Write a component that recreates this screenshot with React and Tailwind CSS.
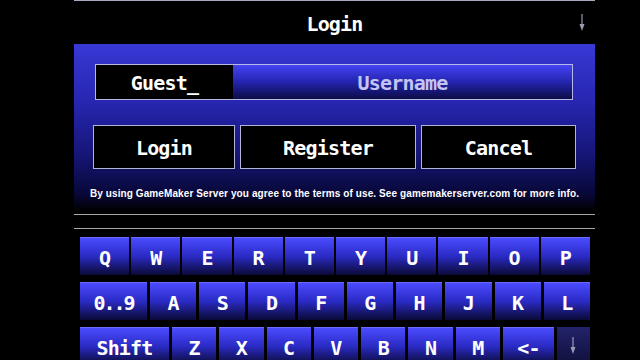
import React from "react";

const mono = { fontFamily: '"DejaVu Sans Mono", "Liberation Mono", monospace' };
const big = "font-bold text-[20px] tracking-[-0.8px] leading-none";

function DownArrow({ className = "" }) {
  return (
    <svg width="8" height="18" viewBox="0 0 8 18" className={className}>
      <line x1="4" y1="0" x2="4" y2="12" stroke="currentColor" strokeWidth="1.2" />
      <path d="M1.5 10 L6.5 10 L4 17 Z" fill="currentColor" />
    </svg>
  );
}

function Key({ label, className = "flex-1" }) {
  return (
    <div
      className={`${className} h-[38px] pt-[2px] flex items-center justify-center bg-gradient-to-b from-[#4b4bff] via-[#2a2ac4] to-[#0a0a38] border-t border-[#6a6aff] text-white ${big}`}
      style={mono}
    >
      {label}
    </div>
  );
}

export default function App() {
  const row1 = ["Q", "W", "E", "R", "T", "Y", "U", "I", "O", "P"];
  const row2 = ["A", "S", "D", "F", "G", "H", "J", "K", "L"];
  const row3 = ["Z", "X", "C", "V", "B", "N", "M"];

  return (
    <div className="w-[640px] h-[360px] bg-black overflow-hidden pl-[74px]">
      <div className="w-[521px] flex flex-col">
        {/* top rule */}
        <div className="h-px bg-[#a8a8c0]" />

        {/* header */}
        <div className="h-[43px] grid grid-cols-[1fr_auto_1fr] items-center">
          <div />
          <div className={`text-white ${big} pt-[2px]`} style={mono}>
            Login
          </div>
          <div className="justify-self-end pr-[9px] text-[#9a9ab0]">
            <DownArrow />
          </div>
        </div>

        {/* login panel */}
        <div className="h-[167px] bg-[linear-gradient(to_bottom,#3838d6_0%,#2626b0_35%,#16167a_65%,#080838_90%,#000000_100%)] pt-[20px] flex flex-col">
          <div className="ml-[21px] mr-[22px] h-[36px] border border-[#b8b8e4] flex">
            <div
              className={`w-[137px] pt-[2px] bg-black flex items-center justify-center text-white ${big}`}
              style={mono}
            >
              Guest_
            </div>
            <div
              className={`flex-1 pt-[2px] bg-gradient-to-b from-[#4444f4] via-[#2424b0] to-[#0c0c48] flex items-center justify-center text-[#c4c4f2] ${big}`}
              style={mono}
            >
              Username
            </div>
          </div>

          <div className="mx-[19px] mt-[25px] flex gap-[5px]">
            {[
              ["Login", "w-[142px]"],
              ["Register", "w-[176px]"],
              ["Cancel", "w-[155px]"],
            ].map(([t, w]) => (
              <div
                key={t}
                className={`${w} h-[44px] pt-[2px] bg-black border border-[#b4b4d4] flex items-center justify-center text-white ${big}`}
                style={mono}
              >
                {t}
              </div>
            ))}
          </div>

          <div
            className="mt-[19px] text-center text-white font-bold text-[10px] tracking-[0.1px] leading-[12px]"
            style={{ fontFamily: '"Liberation Sans", Arial, sans-serif' }}
          >
            By using GameMaker Server you agree to the terms of use. See gamemakerserver.com for more info.
          </div>
        </div>

        <div className="h-[3px]" />
        <div className="h-px bg-[#a8a8a8]" />
        <div className="h-[13px]" />
        <div className="h-px bg-[#a8a8a8]" />

        {/* keyboard */}
        <div className="pt-[8px] pl-[6px] pr-[5px] flex flex-col gap-[7px]">
          <div className="flex gap-[2px]">
            {row1.map((k) => (
              <Key key={k} label={k} />
            ))}
          </div>
          <div className="flex gap-[3px]">
            <Key label="0..9" className="w-[67px] tracking-[-2px]" />
            {row2.map((k) => (
              <Key key={k} label={k} />
            ))}
          </div>
          <div className="flex gap-[3px]">
            <Key label="Shift" className="w-[89px]" />
            {row3.map((k) => (
              <Key key={k} label={k} />
            ))}
            <Key label="<-" className="w-[51px]" />
            <div className="w-[33px] h-[38px] flex items-center justify-center bg-gradient-to-b from-[#22226a] to-[#10103c] text-[#9a9ab8]">
              <DownArrow />
            </div>
          </div>
        </div>
      </div>
    </div>
  );
}
